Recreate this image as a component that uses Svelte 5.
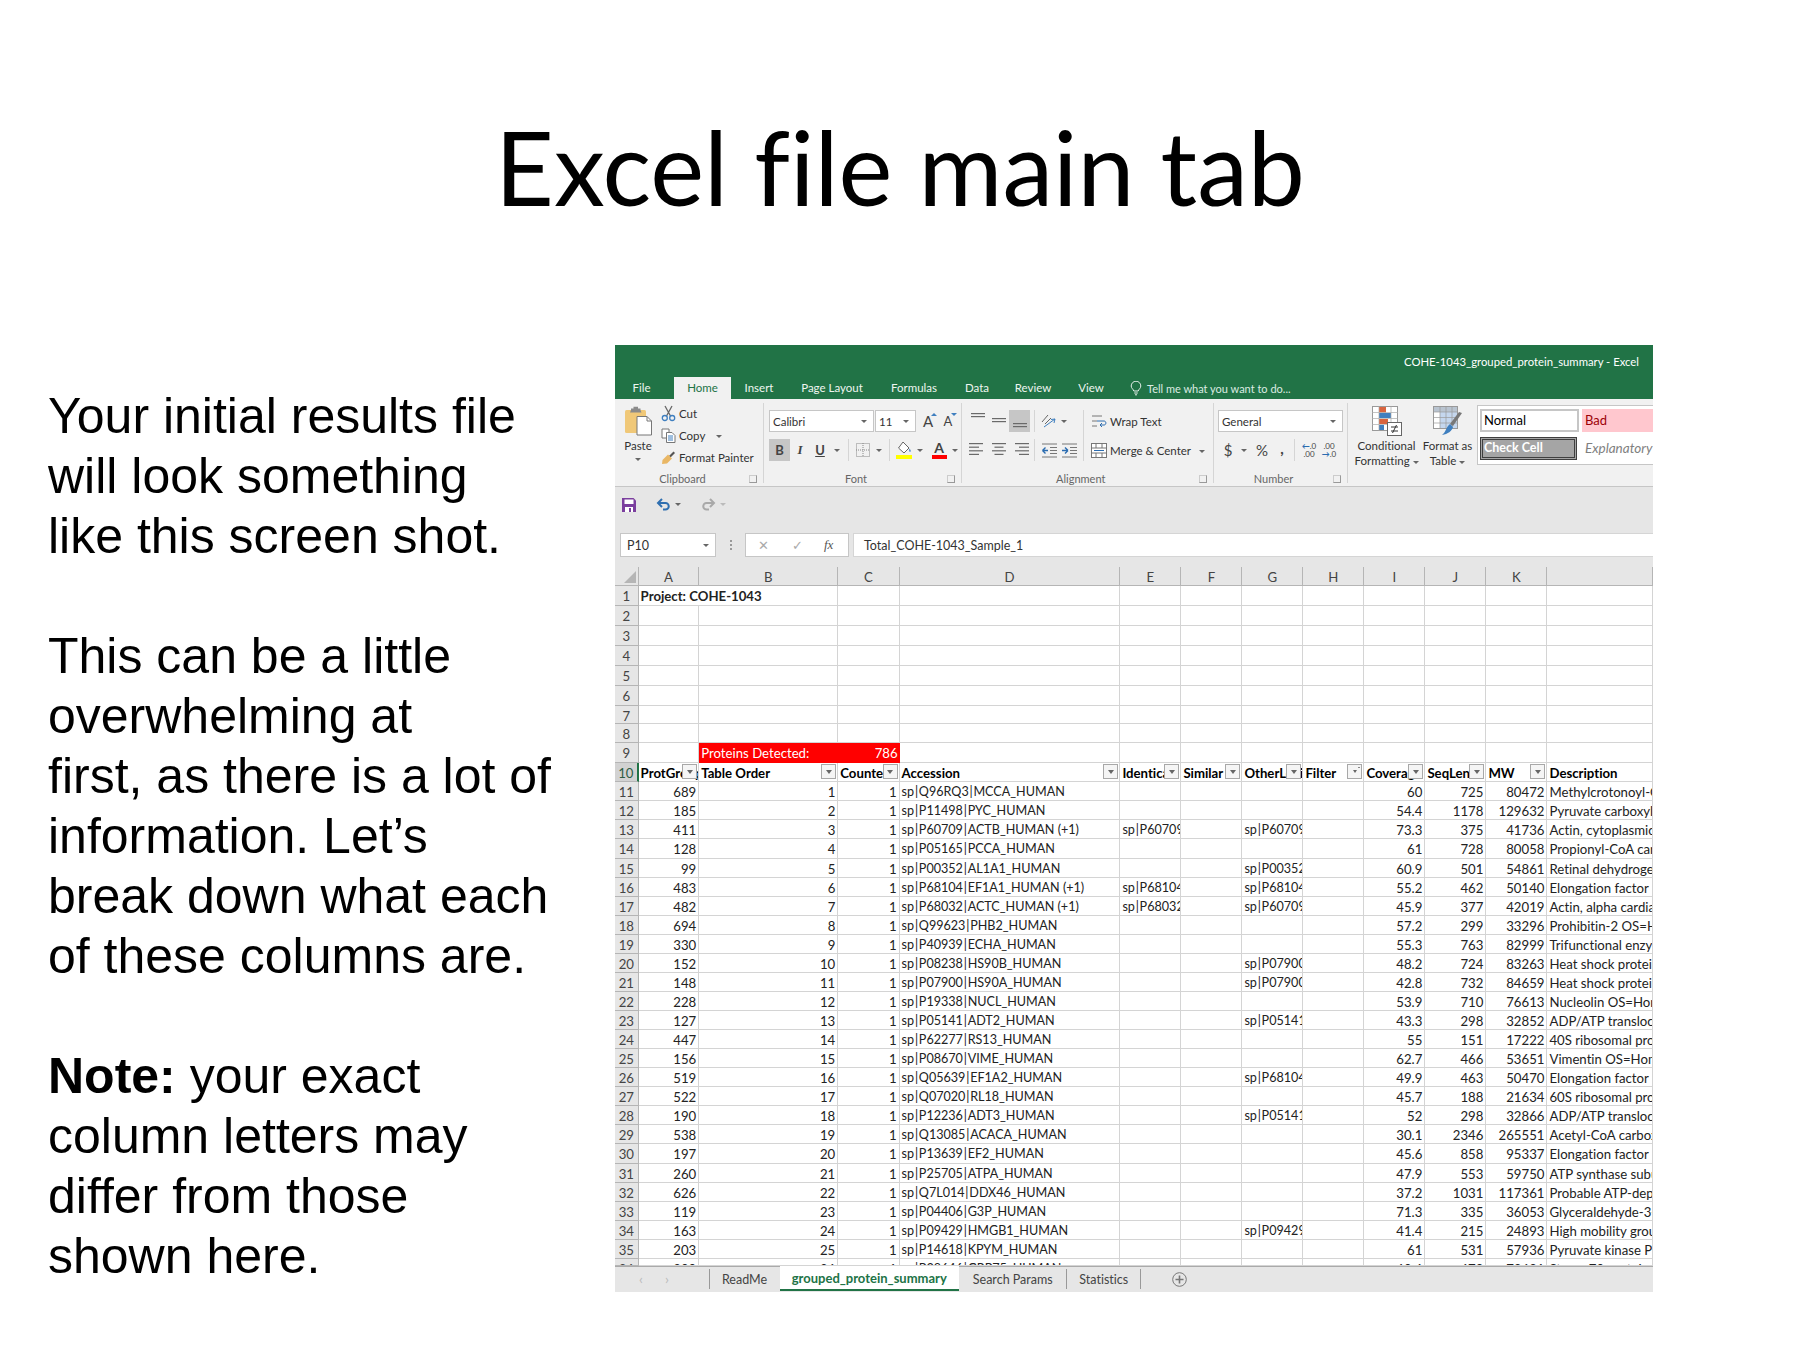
<script>
	const columnLetters = ['A', 'B', 'C', 'D', 'E', 'F', 'G', 'H', 'I', 'J', 'K', ''];

	const headers = [
		{ text: 'ProtGroup', filter: true },
		{ text: 'Table Order', filter: true },
		{ text: 'Counted', filter: true },
		{ text: 'Accession', filter: true },
		{ text: 'Identical', filter: true },
		{ text: 'Similar', filter: true },
		{ text: 'OtherLoci', filter: true },
		{ text: 'Filter', filter: true, sorted: true },
		{ text: 'Coverage', filter: true },
		{ text: 'SeqLen', filter: true },
		{ text: 'MW', filter: true },
		{ text: 'Description', filter: false }
	];

	// group, order, accession, identical, otherloci, coverage, seqlen, mw, description
	const proteins = [
		[689, 1, 'sp|Q96RQ3|MCCA_HUMAN', '', '', 60, 725, 80472, 'Methylcrotonoyl-CoA'],
		[185, 2, 'sp|P11498|PYC_HUMAN', '', '', 54.4, 1178, 129632, 'Pyruvate carboxylase'],
		[411, 3, 'sp|P60709|ACTB_HUMAN (+1)', 'sp|P60709|ACTB', 'sp|P60709|ACTB', 73.3, 375, 41736, 'Actin, cytoplasmic 1'],
		[128, 4, 'sp|P05165|PCCA_HUMAN', '', '', 61, 728, 80058, 'Propionyl-CoA carboxylase'],
		[99, 5, 'sp|P00352|AL1A1_HUMAN', '', 'sp|P00352|AL1A1', 60.9, 501, 54861, 'Retinal dehydrogenase 1'],
		[483, 6, 'sp|P68104|EF1A1_HUMAN (+1)', 'sp|P68104|EF1A1', 'sp|P68104|EF1A1', 55.2, 462, 50140, 'Elongation factor 1-alpha'],
		[482, 7, 'sp|P68032|ACTC_HUMAN (+1)', 'sp|P68032|ACTC', 'sp|P60709|ACTB', 45.9, 377, 42019, 'Actin, alpha cardiac muscle'],
		[694, 8, 'sp|Q99623|PHB2_HUMAN', '', '', 57.2, 299, 33296, 'Prohibitin-2 OS=Homo sapiens'],
		[330, 9, 'sp|P40939|ECHA_HUMAN', '', '', 55.3, 763, 82999, 'Trifunctional enzyme subunit'],
		[152, 10, 'sp|P08238|HS90B_HUMAN', '', 'sp|P07900|HS90A', 48.2, 724, 83263, 'Heat shock protein HSP 90'],
		[148, 11, 'sp|P07900|HS90A_HUMAN', '', 'sp|P07900|HS90A', 42.8, 732, 84659, 'Heat shock protein HSP 90'],
		[228, 12, 'sp|P19338|NUCL_HUMAN', '', '', 53.9, 710, 76613, 'Nucleolin OS=Homo sapiens'],
		[127, 13, 'sp|P05141|ADT2_HUMAN', '', 'sp|P05141|ADT2', 43.3, 298, 32852, 'ADP/ATP translocase 2'],
		[447, 14, 'sp|P62277|RS13_HUMAN', '', '', 55, 151, 17222, '40S ribosomal protein S13'],
		[156, 15, 'sp|P08670|VIME_HUMAN', '', '', 62.7, 466, 53651, 'Vimentin OS=Homo sapiens'],
		[519, 16, 'sp|Q05639|EF1A2_HUMAN', '', 'sp|P68104|EF1A1', 49.9, 463, 50470, 'Elongation factor 1-alpha 2'],
		[522, 17, 'sp|Q07020|RL18_HUMAN', '', '', 45.7, 188, 21634, '60S ribosomal protein L18'],
		[190, 18, 'sp|P12236|ADT3_HUMAN', '', 'sp|P05141|ADT2', 52, 298, 32866, 'ADP/ATP translocase 3'],
		[538, 19, 'sp|Q13085|ACACA_HUMAN', '', '', 30.1, 2346, 265551, 'Acetyl-CoA carboxylase 1'],
		[197, 20, 'sp|P13639|EF2_HUMAN', '', '', 45.6, 858, 95337, 'Elongation factor 2'],
		[260, 21, 'sp|P25705|ATPA_HUMAN', '', '', 47.9, 553, 59750, 'ATP synthase subunit alpha'],
		[626, 22, 'sp|Q7L014|DDX46_HUMAN', '', '', 37.2, 1031, 117361, 'Probable ATP-dependent'],
		[119, 23, 'sp|P04406|G3P_HUMAN', '', '', 71.3, 335, 36053, 'Glyceraldehyde-3-phosphate'],
		[163, 24, 'sp|P09429|HMGB1_HUMAN', '', 'sp|P09429|HMGB1', 41.4, 215, 24893, 'High mobility group protein'],
		[203, 25, 'sp|P14618|KPYM_HUMAN', '', '', 61, 531, 57936, 'Pyruvate kinase PKM'],
		[200, 26, 'sp|P38646|GRP75_HUMAN', '', '', 60.6, 679, 73681, 'Stress-70 protein']
	];

	const emptyRows = [2, 3, 4, 5, 6, 7, 8];
	const tabs = ['File', 'Home', 'Insert', 'Page Layout', 'Formulas', 'Data', 'Review', 'View'];

	// Calibri's pipe sits wider than Lato's, a hair space each side evens that out
	const spaced = (s) => s.replaceAll('|', '\u200a|\u200a');
</script>

{#snippet caret()}
	<span class="caret"></span>
{/snippet}

{#snippet lines(widths, y0 = 5, gap = 4)}
	<svg width="18" height="20" viewBox="0 0 18 20">
		{#each widths as w, i}
			<rect x={(18 - w[0]) / 2 + w[1]} y={y0 + i * gap} width={w[0]} height="1.2" fill="#6a6a6a" />
		{/each}
	</svg>
{/snippet}

<div class="slide">
	<h1>Excel file main tab</h1>

	<div class="content">
		<div class="notes">
			<p>Your initial results file<br />will look something<br />like this screen shot.</p>
			<p>This can be a little<br />overwhelming at<br />first, as there is a lot of<br />information. Let’s<br />break down what each<br />of these columns are.</p>
			<p><b>Note:</b> your exact<br />column letters may<br />differ from those<br />shown here.</p>
		</div>

		<div class="excel">
			<div class="titlebar">
				<div class="doc-title">COHE-1043_grouped_protein_summary - Excel</div>
				<div class="tabs">
					{#each tabs as tab}
						<div class="tab" class:active={tab === 'Home'}>{tab}</div>
					{/each}
					<div class="tell">
						<svg width="12" height="15" viewBox="0 0 12 15" fill="none" stroke="#e6f0ea" stroke-width="1">
							<path d="M3.8 10C3.4 8.2 1.2 7.4 1.2 5A4.8 4.8 0 0 1 10.8 5C10.8 7.4 8.6 8.2 8.2 10Z" />
							<path d="M4.2 12H7.8M5 13.8H7" />
						</svg>
						Tell me what you want to do...
					</div>
				</div>
			</div>

			<div class="ribbon">
				<section class="group clipboard">
					<div class="body">
						<div class="paste">
							<svg width="29" height="30" viewBox="0 0 29 30">
								<rect x="1" y="4" width="21" height="23" rx="1.5" fill="#f0c878" />
								<path d="M7 4V2.5H9.5V0.8H14V2.5H16.5V4L17.5 6.5H6Z" fill="#8a8a8a" />
								<path d="M13 10.5H23L27.5 15V29H13Z" fill="#fff" stroke="#777" />
								<path d="M23 10.5V15H27.5" fill="none" stroke="#777" />
							</svg>
							<span>Paste</span>
							{@render caret()}
						</div>
						<div class="clip-list">
							<div class="clip-row">
								<svg width="15" height="17" viewBox="0 0 15 17" fill="none">
									<path d="M4 1L9.5 11M11 1L5.5 11" stroke="#666" stroke-width="1.3" />
									<circle cx="3.8" cy="13" r="2.5" stroke="#3f7fbf" stroke-width="1.3" />
									<circle cx="11.2" cy="13" r="2.5" stroke="#3f7fbf" stroke-width="1.3" />
								</svg>
								Cut
							</div>
							<div class="clip-row">
								<svg width="15" height="17" viewBox="0 0 15 17" fill="#fff" stroke="#777">
									<path d="M1 2H8V11H1Z" />
									<path d="M5.5 5.5H11L14 8.5V15.5H5.5Z" />
									<path d="M7 9H12M7 11H12M7 13H12" stroke="#3f7fbf" />
								</svg>
								Copy <span class="copy-caret">{@render caret()}</span>
							</div>
							<div class="clip-row">
								<svg width="15" height="17" viewBox="0 0 15 17">
									<path d="M8 7L12.5 2.5L14 4L9.5 8.5Z" fill="#555" />
									<path d="M7 5.5L11 9.5L6 14.5L1 15L1.5 11Z" fill="#e9b765" />
								</svg>
								Format Painter
							</div>
						</div>
					</div>
					<div class="label">Clipboard <span class="launcher"></span></div>
				</section>

				<section class="group font">
					<div class="body stack">
						<div class="row">
							<div class="combo w105">Calibri {@render caret()}</div>
							<div class="combo w41">11 {@render caret()}</div>
							<span class="tool t20 grow-a">A<i class="up"></i></span>
							<span class="tool t20 shrink-a">A<i class="up down"></i></span>
						</div>
						<div class="row">
							<span class="tool t21 selected bold">B</span>
							<span class="tool t20 ital">I</span>
							<span class="tool t20 under">U</span>
							<span class="tool t14">{@render caret()}</span>
							<span class="sep"></span>
							<span class="tool t20">
								<svg width="14" height="14" viewBox="0 0 14 14" fill="none" stroke="#888" stroke-dasharray="1 1">
									<rect x="0.5" y="0.5" width="13" height="13" />
									<path d="M7 0V14M0 7H14" />
								</svg>
							</span>
							<span class="tool t12">{@render caret()}</span>
							<span class="sep"></span>
							<span class="tool t20">
								<svg width="16" height="18" viewBox="0 0 16 18">
									<path d="M7 1L13 7L8 12L2.5 7Z" fill="#fff" stroke="#666" />
									<path d="M13.5 7.5C15 9.5 15 10.5 14 11C13 10.5 13 9.5 13.5 7.5Z" fill="#3f7fbf" />
									<rect x="0" y="14" width="16" height="4" fill="#ffff00" />
								</svg>
							</span>
							<span class="tool t12">{@render caret()}</span>
							<span class="tool t20 font-color">A<i></i></span>
							<span class="tool t12">{@render caret()}</span>
						</div>
					</div>
					<div class="label">Font <span class="launcher"></span></div>
				</section>

				<section class="group alignment">
					<div class="body split">
						<div class="stack align-left">
							<div class="row">
								<span class="tool t21">{@render lines([[14, 0], [14, 0]], 2, 3)}</span>
								<span class="tool t21">{@render lines([[14, 0], [14, 0]], 7, 3)}</span>
								<span class="tool t21 selected">{@render lines([[14, 0], [14, 0]], 12, 3)}</span>
								<span class="sep"></span>
								<span class="tool t20">
									<svg width="17" height="16" viewBox="0 0 17 16" fill="none" stroke="#666">
										<path d="M1 9L7 2M4 11L10 5" />
										<path d="M3 14L14 6M14 6L10 6.5M14 6L13 10" stroke="#3f7fbf" />
									</svg>
								</span>
								<span class="tool t10">{@render caret()}</span>
							</div>
							<div class="row">
								<span class="tool t21">{@render lines([[14, -2], [10, -4], [14, -2], [10, -4]], 3, 3.6)}</span>
								<span class="tool t21">{@render lines([[14, 0], [9, 0], [14, 0], [9, 0]], 3, 3.6)}</span>
								<span class="tool t21">{@render lines([[14, 2], [10, 4], [14, 2], [10, 4]], 3, 3.6)}</span>
								<span class="sep"></span>
								<span class="tool t20">
									<svg width="17" height="15" viewBox="0 0 17 15" fill="none" stroke="#777">
										<path d="M1 1H16M9 4.5H16M9 7.5H16M9 10.5H16M1 14H16" />
										<path d="M7 7.5H1.5M1.5 7.5L4.5 4.5M1.5 7.5L4.5 10.5" stroke="#2b6cb0" stroke-width="1.4" />
									</svg>
								</span>
								<span class="tool t20">
									<svg width="17" height="15" viewBox="0 0 17 15" fill="none" stroke="#777">
										<path d="M1 1H16M9 4.5H16M9 7.5H16M9 10.5H16M1 14H16" />
										<path d="M1 7.5H7M7 7.5L4 4.5M7 7.5L4 10.5" stroke="#2b6cb0" stroke-width="1.4" />
									</svg>
								</span>
							</div>
						</div>
						<div class="stack align-right">
							<div class="row text-tool">
								<svg width="16" height="15" viewBox="0 0 16 15" fill="none" stroke="#777">
									<path d="M1 2H11M1 7H6M1 12H6" />
									<path d="M6 7H13C15.5 7 15.5 11 13 11H9M9 11L11 9M9 11L11 13" stroke="#2b6cb0" />
								</svg>
								Wrap Text
							</div>
							<div class="row text-tool">
								<svg width="16" height="15" viewBox="0 0 16 15" fill="#fff" stroke="#777">
									<rect x="0.5" y="0.5" width="15" height="14" />
									<path d="M0 5H16M0 10H16M5 0V5M11 0V5M5 10V15M11 10V15" />
									<path d="M3 7.5H13" stroke="#2b6cb0" />
								</svg>
								Merge &amp; Center <span class="merge-caret">{@render caret()}</span>
							</div>
						</div>
					</div>
					<div class="label">Alignment <span class="launcher"></span></div>
				</section>

				<section class="group number">
					<div class="body stack">
						<div class="row">
							<div class="combo w125">General {@render caret()}</div>
						</div>
						<div class="row">
							<span class="tool t20 symbol">$</span>
							<span class="tool t12">{@render caret()}</span>
							<span class="tool t24 symbol">%</span>
							<span class="tool t16 symbol comma">,</span>
							<span class="sep"></span>
							<span class="tool t20 decimals"><b>←</b>.0<br />.00</span>
							<span class="tool t20 decimals">.00<br /><b>→</b>.0</span>
						</div>
					</div>
					<div class="label">Number <span class="launcher"></span></div>
				</section>

				<section class="group styles">
					<div class="big">
						<svg width="30" height="30" viewBox="0 0 30 30">
							<rect x="0.5" y="0.5" width="25" height="24" fill="#fff" stroke="#999" />
							<rect x="7" y="1" width="7" height="5.5" fill="#d9653f" />
							<rect x="7" y="7" width="12" height="5" fill="#3f7fbf" />
							<rect x="7" y="13" width="9" height="5" fill="#d9653f" />
							<rect x="7" y="19" width="5" height="5" fill="#3f7fbf" />
							<path d="M7 0V25M19 0V25M0 6.5H26M0 12.5H26M0 18.5H26" stroke="#aaa" stroke-width="0.7" fill="none" />
							<rect x="15.5" y="16.5" width="14" height="13" fill="#fff" stroke="#666" />
							<path d="M19 21H26M19 25H26M24.5 19L20.5 27" stroke="#333" fill="none" />
						</svg>
						<span>Conditional</span>
						<span>Formatting {@render caret()}</span>
					</div>
					<div class="big">
						<svg width="30" height="30" viewBox="0 0 30 30">
							<rect x="0.5" y="0.5" width="24" height="22" fill="#fff" stroke="#999" />
							<rect x="1" y="1" width="23" height="5" fill="#b9c4d0" />
							<rect x="7" y="6" width="17" height="16" fill="#c5d7ee" />
							<path d="M7 0V23M13 0V23M19 0V23M0 6H25M0 11.5H25M0 17H25" stroke="#999" stroke-width="0.7" fill="none" />
							<path d="M29 7L20 20L17 18L26 6Z" fill="#777" />
							<path d="M17 18L20 21C19 25 15 28 9 29C13 26 13 21 17 18Z" fill="#3f7fbf" />
						</svg>
						<span>Format as</span>
						<span>Table {@render caret()}</span>
					</div>
					<div class="gallery">
						<div class="style normal">Normal</div>
						<div class="style bad">Bad</div>
						<div class="style check">Check Cell</div>
						<div class="style explain">Explanatory</div>
					</div>
				</section>
			</div>

			<div class="qat">
				<svg width="14" height="14" viewBox="0 0 14 14">
					<path d="M0 0H11.5L14 2.5V14H0Z" fill="#7b3f9e" />
					<rect x="2.5" y="1.5" width="9" height="4.5" fill="#fff" />
					<rect x="3" y="9" width="8" height="5" fill="#fff" />
					<rect x="7" y="10" width="2" height="4" fill="#7b3f9e" />
				</svg>
				<span class="qat-undo">
					<svg width="15" height="13" viewBox="0 0 15 13" fill="none" stroke="#2f6fb0" stroke-width="2">
						<path d="M2 5H9.5A3.2 3.2 0 0 1 9.5 11.5H7" />
						<path d="M6 1L2 5L6 9" />
					</svg>
					{@render caret()}
				</span>
				<span class="qat-redo">
					<svg width="15" height="13" viewBox="0 0 15 13" fill="none" stroke="#a9a9a9" stroke-width="2">
						<path d="M13 5H5.5A3.2 3.2 0 0 0 5.5 11.5H8" />
						<path d="M9 1L13 5L9 9" />
					</svg>
					{@render caret()}
				</span>
			</div>

			<div class="formula-bar">
				<div class="name-box">P10 {@render caret()}</div>
				<div class="grip"></div>
				<div class="fx-box">
					<span class="fx-x">✕</span>
					<span class="fx-check">✓</span>
					<span class="fx">fx</span>
				</div>
				<div class="formula-input">Total_COHE-1043_Sample_1</div>
			</div>

			<div class="sheet">
				<div class="grid">
					<div class="cell corner"><span></span></div>
					{#each columnLetters as letter}
						<div class="cell col-head">{letter}</div>
					{/each}

					<div class="cell row-head">1</div>
					<div class="cell bold spill">Project: COHE-1043</div>
					{#each Array(11) as _}
						<div class="cell"></div>
					{/each}

					{#each emptyRows as n}
						<div class="cell row-head">{n}</div>
						{#each Array(12) as _}
							<div class="cell"></div>
						{/each}
					{/each}

					<div class="cell row-head">9</div>
					<div class="cell"></div>
					<div class="cell red">Proteins Detected:</div>
					<div class="cell red num">786</div>
					{#each Array(9) as _}
						<div class="cell"></div>
					{/each}

					<div class="cell row-head current">10</div>
					{#each headers as h}
						<div class="cell bold head">
							{h.text}
							{#if h.filter}
								<span class="filter" class:sorted={h.sorted}>
									<span class="caret"></span>
								</span>
							{/if}
						</div>
					{/each}

					{#each proteins as p, i}
						<div class="cell row-head">{i + 11}</div>
						<div class="cell num">{p[0]}</div>
						<div class="cell num">{p[1]}</div>
						<div class="cell num">1</div>
						<div class="cell acc">{spaced(p[2])}</div>
						<div class="cell acc">{spaced(p[3])}</div>
						<div class="cell"></div>
						<div class="cell acc">{spaced(p[4])}</div>
						<div class="cell"></div>
						<div class="cell num">{p[5]}</div>
						<div class="cell num">{p[6]}</div>
						<div class="cell num">{p[7]}</div>
						<div class="cell">{p[8]}</div>
					{/each}
				</div>
			</div>

			<div class="sheet-tabs">
				<div class="nav"><span>‹</span><span>›</span></div>
				<div class="sheet-tab">ReadMe</div>
				<div class="sheet-tab on">grouped_protein_summary</div>
				<div class="sheet-tab search">Search Params</div>
				<div class="sheet-tab stats">Statistics</div>
				<div class="add-sheet">
					<svg width="15" height="15" viewBox="0 0 15 15" fill="none" stroke="#777">
						<circle cx="7.5" cy="7.5" r="6.8" />
						<path d="M7.5 3.5V11.5M3.5 7.5H11.5" stroke-width="1.6" />
					</svg>
				</div>
			</div>
		</div>
	</div>
</div>

<style>
	:global(body) {
		margin: 0;
		background: #fff;
	}

	.slide {
		width: 1800px;
		height: 1350px;
		overflow: hidden;
		background: #fff;
		color: #000;
		font-family: "Liberation Sans", Arial, sans-serif;
		font-variant-ligatures: none;
	}

	h1 {
		box-sizing: border-box;
		height: 345px;
		margin: 0;
		padding-top: 97px;
		text-align: center;
		font-family: Lato, sans-serif;
		font-weight: 400;
		font-size: 102px;
		line-height: 140px;
	}

	.content {
		display: flex;
		padding-left: 48px;
	}

	.notes {
		width: 567px;
		padding-top: 40.6px;
		font-size: 50px;
		line-height: 60.05px;
	}

	.notes p {
		margin: 0 0 60.05px;
	}

	.excel {
		width: 1038px;
		height: 947px;
		display: flex;
		flex-direction: column;
		overflow: hidden;
		background: #e6e6e6;
		color: #333;
		font-family: Lato, sans-serif;
		font-size: 11.5px;
	}

	.excel > * {
		flex: none;
	}

	.titlebar {
		height: 54px;
		background: #217346;
		color: #fff;
	}

	.doc-title {
		height: 32px;
		padding-right: 14px;
		text-align: right;
		line-height: 34px;
		font-size: 11.3px;
	}

	.tabs {
		display: grid;
		grid-template-columns: 59px 57px 56px 90px 74px 52px 60px 56px 1fr;
		height: 22px;
	}

	.tab {
		text-align: center;
		line-height: 22px;
		color: #eef5f0;
	}

	.tab:first-child {
		padding-right: 6px;
	}

	.tab.active {
		background: #f1f1f1;
		color: #217346;
	}

	.tell {
		display: flex;
		align-items: center;
		gap: 5px;
		padding-left: 11px;
		color: #dcebe2;
		font-size: 11px;
	}

	.ribbon {
		box-sizing: border-box;
		height: 88px;
		display: flex;
		padding-top: 4px;
		background: #f1f1f1;
		border-bottom: 1px solid #c6c6c6;
	}

	.group {
		position: relative;
		box-sizing: border-box;
		height: 80px;
		flex: none;
		border-right: 1px solid #d5d5d5;
	}

	.group.clipboard { width: 149px; }
	.group.font { width: 198px; padding-left: 5px; }
	.group.alignment { width: 251.5px; padding-left: 5px; }
	.group.number { width: 134px; padding-left: 4.5px; }
	.group.styles {
		flex: 1;
		display: flex;
		border-right: 0;
		padding-left: 8.5px;
	}

	.body {
		padding-top: 7px;
	}

	.clipboard .body {
		display: flex;
		padding-top: 2px;
	}

	.label {
		position: absolute;
		left: 0;
		right: 0;
		bottom: -3px;
		height: 14px;
		box-sizing: border-box;
		padding-right: 13px;
		line-height: 14px;
		text-align: center;
		color: #666;
		font-size: 11px;
	}

	.launcher {
		position: absolute;
		right: 6px;
		top: 3px;
		width: 6px;
		height: 6px;
		border: 1px solid #999;
		border-top-color: #ccc;
		border-left-color: #ccc;
	}

	.caret {
		display: inline-block;
		width: 0;
		height: 0;
		border-left: 3px solid transparent;
		border-right: 3px solid transparent;
		border-top: 3px solid #666;
		vertical-align: middle;
	}

	.paste {
		width: 46px;
		display: flex;
		flex-direction: column;
		align-items: center;
		line-height: 14px;
		font-size: 11.5px;
	}

	.paste svg {
		margin-top: 1px;
		margin-bottom: 3px;
	}

	.paste .caret {
		margin-top: 5px;
	}

	.clip-list {
		display: flex;
		flex-direction: column;
		margin-top: -3px;
	}

	.clip-row {
		display: flex;
		align-items: center;
		gap: 3px;
		height: 22px;
		white-space: nowrap;
	}

	.copy-caret {
		margin-left: 8px;
	}

	.stack {
		display: flex;
		flex-direction: column;
		gap: 7px;
	}

	.row {
		display: flex;
		align-items: center;
		height: 22px;
	}

	.combo {
		box-sizing: border-box;
		display: flex;
		align-items: center;
		justify-content: space-between;
		height: 22px;
		padding: 0 6px 0 3px;
		background: #fff;
		border: 1px solid #c6c6c6;
		white-space: nowrap;
	}

	.w105 { width: 105px; }
	.w41 { width: 41px; margin-left: 1px; }
	.w125 { width: 125px; }

	.tool {
		position: relative;
		box-sizing: border-box;
		display: flex;
		align-items: center;
		justify-content: center;
		flex: none;
		height: 22px;
		color: #444;
	}

	.t10 { width: 10px; }
	.t12 { width: 12px; }
	.t14 { width: 14px; }
	.t16 { width: 16px; }
	.t20 { width: 20px; }
	.t21 { width: 21px; }
	.t24 { width: 24px; }

	.selected { background: #c6c6c6; }
	.bold { font-weight: 700; }
	.tool.bold, .tool.ital, .tool.under { font-size: 13px; }
	.ital { font-style: italic; font-family: "Liberation Serif", serif; font-weight: 700; }
	.under { text-decoration: underline; font-weight: 700; }

	.grow-a, .shrink-a {
		font-size: 15px;
	}

	.grow-a { margin-left: 2px; }
	.shrink-a { font-size: 13px; }

	.up {
		position: absolute;
		right: 1px;
		top: 3px;
		border-left: 3px solid transparent;
		border-right: 3px solid transparent;
		border-bottom: 3px solid #3f7fbf;
	}

	.up.down {
		border-bottom: 0;
		border-top: 3px solid #3f7fbf;
	}

	.font-color {
		flex-direction: column;
		margin-left: 3px;
		font-size: 14px;
		font-weight: 700;
		line-height: 14px;
	}

	.font-color i {
		width: 15px;
		height: 4px;
		background: #f00;
	}

	.sep {
		flex: none;
		width: 1px;
		height: 22px;
		margin: 0 4px;
		background: #d5d5d5;
	}

	.split {
		display: flex;
	}

	.align-left {
		box-sizing: border-box;
		width: 116px;
	}

	.align-right {
		padding-left: 7px;
		border-left: 1px solid #d5d5d5;
	}

	.text-tool {
		gap: 3px;
		white-space: nowrap;
	}

	.merge-caret {
		margin-left: 5px;
	}

	.symbol {
		font-size: 15px;
	}

	.comma {
		font-weight: 700;
		padding-bottom: 5px;
	}

	.decimals {
		display: block;
		padding-top: 3px;
		font-size: 8px;
		line-height: 8px;
		text-align: center;
	}

	.decimals b {
		color: #2b6cb0;
	}

	.big {
		width: 61px;
		display: flex;
		flex-direction: column;
		align-items: center;
		padding-top: 3px;
		line-height: 15px;
		font-size: 11.5px;
		white-space: nowrap;
	}

	.big svg {
		margin-bottom: 2px;
	}

	.gallery {
		box-sizing: border-box;
		display: grid;
		grid-template-columns: 102px 100px;
		grid-template-rows: 27px 27px;
		width: 178px;
		height: 60px;
		margin: 2px 0 0 -1px;
		padding: 3px 0 0 2px;
		overflow: hidden;
		background: #fff;
		border: 1px solid #c6c6c6;
		border-right: 0;
		font-size: 13px;
	}

	.style {
		box-sizing: border-box;
		height: 23px;
		line-height: 19px;
		padding-left: 3px;
		white-space: nowrap;
	}

	.normal {
		width: 99px;
		border: 2px solid #c6c6c6;
		color: #000;
		padding-left: 2px;
	}

	.bad {
		background: #ffc7ce;
		color: #9c0006;
		padding-top: 2px;
	}

	.check {
		width: 97px;
		margin-top: 1px;
		background: #a5a5a5;
		border: 3px double #3f3f3f;
		color: #fff;
		font-weight: 700;
		font-size: 12.5px;
		line-height: 16px;
		padding-left: 1px;
	}

	.explain {
		color: #7f7f7f;
		font-style: italic;
		font-size: 13.5px;
		padding-top: 3px;
	}

	.qat {
		height: 46px;
		display: flex;
		align-items: center;
		box-sizing: border-box;
		padding: 0 0 11px 7px;
		gap: 20px;
		background: #e6e6e6;
	}

	.qat-undo, .qat-redo {
		display: flex;
		align-items: center;
		gap: 4px;
	}

	.qat-redo .caret {
		border-top-color: #bbb;
	}

	.formula-bar {
		height: 24px;
		display: flex;
	}

	.name-box {
		box-sizing: border-box;
		display: flex;
		align-items: center;
		justify-content: space-between;
		width: 96px;
		margin-left: 5px;
		padding: 0 6px 0 6px;
		background: #fff;
		border: 1px solid #c6c6c6;
		font-size: 12.5px;
	}

	.grip {
		width: 29px;
		position: relative;
	}

	.grip::after {
		content: "";
		position: absolute;
		left: 14px;
		top: 7px;
		height: 10px;
		border-left: 2px dotted #999;
	}

	.fx-box {
		box-sizing: border-box;
		display: flex;
		align-items: center;
		width: 104px;
		background: #fff;
		border: 1px solid #c6c6c6;
		color: #aaa;
	}

	.fx-x { margin-left: 12px; font-size: 13px; }
	.fx-check { margin-left: 23px; font-size: 13px; }
	.fx {
		margin-left: 21px;
		color: #555;
		font-family: "Liberation Serif", serif;
		font-style: italic;
		font-size: 13px;
	}

	.formula-input {
		flex: 1;
		margin-left: 4px;
		padding-left: 10px;
		background: #fff;
		border: 1px solid #d5d5d5;
		border-right: 0;
		line-height: 23px;
		font-size: 12.5px;
	}

	.sheet {
		height: 698.7px;
		margin-top: 10.3px;
		overflow: hidden;
		background: #fff;
	}

	.grid {
		display: grid;
		grid-template-columns: 23.6px 60.6px 139.1px 61.3px 220.8px 61px 61px 61px 61px 61px 61px 61.1px 105.5px;
		grid-template-rows: 18.4px repeat(6, 20px) 18.6px 19px 20px 19px repeat(25, 19.07px) 7px;
		font-size: 13.2px;
		color: #222;
	}

	.cell {
		position: relative;
		box-sizing: border-box;
		padding: 1px 2px 0;
		overflow: hidden;
		white-space: nowrap;
		line-height: 18px;
		border-right: 1px solid #d4d4d4;
		border-bottom: 1px solid #d4d4d4;
	}

	.acc {
		font-size: 12.6px;
	}

	.num {
		text-align: right;
	}

	.spill {
		overflow: visible;
		border-right: 0;
		z-index: 1;
	}

	.corner, .col-head, .row-head {
		background: #e6e6e6;
		border-color: #b5b5b5;
		color: #444;
		text-align: center;
		padding: 1px 0 0;
	}

	.corner span {
		position: absolute;
		right: 2px;
		bottom: 2px;
		border-left: 12px solid transparent;
		border-bottom: 12px solid #b5b5b5;
	}

	.col-head {
		line-height: 18px;
	}

	.current {
		background: #d2d2d2;
		border-right: 2px solid #217346;
		color: #2f5d44;
	}

	.red {
		background: #f00;
		color: #fff;
		border-right: 0;
		border-bottom: 0;
	}

	.head {
		color: #000;
	}

	.filter {
		position: absolute;
		right: 1px;
		top: 1px;
		box-sizing: border-box;
		display: flex;
		align-items: center;
		justify-content: center;
		width: 15px;
		height: 15px;
		background: #f5f5f5;
		border: 1px solid #a8a8a8;
	}

	.filter .caret {
		border-left-width: 3.5px;
		border-right-width: 3.5px;
		border-top-width: 4px;
	}

	.filter.sorted .caret {
		border-left-width: 2px;
		border-right-width: 2px;
		border-top-width: 3px;
		box-shadow: 4px -4px 0 -1px #888;
	}

	.sheet-tabs {
		position: relative;
		box-sizing: border-box;
		height: 26px;
		display: grid;
		grid-template-columns: 94.5px 70px 179.5px 107.5px 74.5px 1fr;
		background: #e6e6e6;
		border-top: 1px solid #aaa;
		font-size: 12.5px;
		line-height: 25px;
	}

	.nav {
		display: flex;
		gap: 22px;
		padding-left: 24px;
		color: #bbb;
		border-right: 1px solid #999;
		box-sizing: border-box;
		height: 20px;
		margin-top: 2px;
		line-height: 20px;
		font-size: 14px;
	}

	.sheet-tab {
		text-align: center;
		color: #444;
	}

	.sheet-tab.on {
		margin-top: -1px;
		height: 25px;
		box-sizing: border-box;
		background: #fff;
		border-bottom: 2px solid #217346;
		color: #217346;
		font-weight: 700;
		font-size: 13px;
	}

	.search, .stats {
		position: relative;
	}

	.search::after, .stats::after {
		content: "";
		position: absolute;
		right: 0;
		top: 2px;
		height: 20px;
		border-right: 1px solid #999;
	}

	.add-sheet {
		display: flex;
		align-items: center;
		padding-left: 31px;
	}
</style>
